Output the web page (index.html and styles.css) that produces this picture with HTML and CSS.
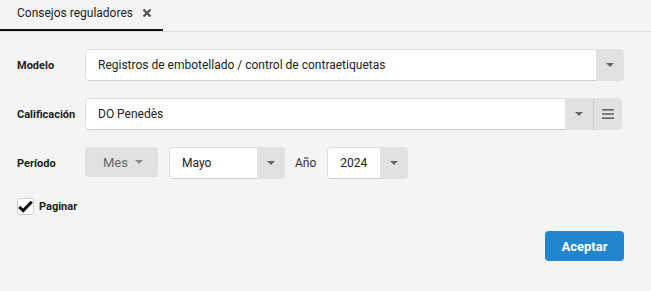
FILE: index.html
```html
<!DOCTYPE html>
<html>
<head>
<meta charset="utf-8">
<link rel="stylesheet" href="styles.css">
</head>
<body>
<div class="tabbar">
  <div class="tab">Consejos reguladores <svg class="close" width="10" height="10" viewBox="0 0 10 10"><path d="M1.5 1.5 L8.5 8.5 M8.5 1.5 L1.5 8.5" stroke="#555" stroke-width="2.4" stroke-linecap="butt"/></svg></div>
</div>
<div class="form">
  <div class="row">
    <label class="lbl">Modelo</label>
    <div class="group">
      <div class="input grow">Registros de embotellado / control de contraetiquetas</div>
      <div class="btn drop"><span class="caret"></span></div>
    </div>
  </div>
  <div class="row row-cal">
    <label class="lbl">Calificación</label>
    <div class="group">
      <div class="input grow">DO Penedès</div>
      <div class="btn drop mid"><span class="caret"></span></div>
      <div class="btn drop menu">
        <svg width="12" height="10" viewBox="0 0 12 10"><rect x="0" y="0" width="12" height="1.6" fill="#666"/><rect x="0" y="4.2" width="12" height="1.6" fill="#666"/><rect x="0" y="8.4" width="12" height="1.6" fill="#666"/></svg>
      </div>
    </div>
  </div>
  <div class="row">
    <label class="lbl">Período</label>
    <div class="mes">Mes <span class="caret"></span></div>
    <div class="group small mayo">
      <div class="input">Mayo</div>
      <div class="btn drop"><span class="caret"></span></div>
    </div>
    <span class="ano">Año</span>
    <div class="group small year">
      <div class="input">2024</div>
      <div class="btn drop"><span class="caret"></span></div>
    </div>
  </div>
  <div class="check-row">
    <span class="checkbox">
      <svg width="15" height="13" viewBox="0 0 15 13"><path d="M1.2 6.8 L5.2 10.6 L13.8 1.8" fill="none" stroke="#111" stroke-width="3" stroke-linecap="butt" stroke-linejoin="miter"/></svg>
    </span>
    <span class="check-lbl">Paginar</span>
  </div>
  <div class="actions">
    <button class="primary">Aceptar</button>
  </div>
</div>
</body>
</html>
```
FILE: styles.css
```css
html, body {
  margin: 0;
  padding: 0;
  background: #f4f4f4;
  font-family: Roboto, "Liberation Sans", sans-serif;
  color: #222;
}
.tabbar {
  height: 31px;
  border-bottom: 1px solid #dcdcdc;
  display: flex;
}
.tab {
  box-sizing: border-box;
  width: 163px;
  height: 31px;
  padding: 6px 0 0 17px;
  font-size: 12px;
  color: #1b1b1b;
  border-bottom: 2px solid #111;
  line-height: 15px;
}
.close {
  margin-left: 6px;
  vertical-align: -1px;
}
.form {
  padding: 17px 27px 0 17px;
}
.row {
  display: flex;
  align-items: center;
  height: 32px;
  margin-bottom: 17px;
}
.row-cal .group {
  margin-right: 2px;
}
.lbl {
  width: 68px;
  flex: none;
  font-size: 11px;
  font-weight: bold;
  color: #222;
}
.group {
  flex: 1;
  display: flex;
  height: 32px;
  border-radius: 4px;
  overflow: hidden;
}
.group.small {
  flex: none;
}
.input {
  box-sizing: border-box;
  height: 32px;
  background: #fff;
  border: 1px solid #dedede;
  border-bottom-color: #cfcfcf;
  border-right: none;
  border-radius: 4px 0 0 4px;
  padding-left: 12px;
  font-size: 12px;
  line-height: 30px;
  color: #222;
}
.grow {
  flex: 1;
}
.btn {
  width: 28px;
  flex: none;
  background: #e0e1e2;
  display: flex;
  align-items: center;
  justify-content: center;
}
.btn.mid {
  border-right: 1px solid #cfd0d1;
}
.caret {
  display: inline-block;
  width: 0;
  height: 0;
  border-left: 4px solid transparent;
  border-right: 4px solid transparent;
  border-top: 4px solid #666;
}
.mes {
  box-sizing: border-box;
  width: 73px;
  height: 30px;
  margin-top: -2px;
  flex: none;
  background: #e0e1e2;
  border-radius: 4px;
  color: #666;
  font-size: 13px;
  display: flex;
  align-items: center;
  padding-left: 18px;
  gap: 7px;
}
.mes .caret {
  border-top-color: #888;
}
.mayo {
  margin-left: 11px;
}
.mayo .input {
  width: 88px;
}
.ano {
  margin: 0 11px 0 10px;
  font-size: 12px;
  color: #333;
}
.year .input {
  width: 53px;
}
.check-row {
  display: flex;
  align-items: center;
  height: 20px;
  margin-top: 0;
}
.checkbox {
  box-sizing: border-box;
  width: 17px;
  height: 17px;
  background: #fff;
  border: 1px solid #cfcfcf;
  border-radius: 3px;
  display: flex;
  align-items: center;
  justify-content: center;
}
.check-lbl {
  margin-left: 5px;
  font-size: 11px;
  font-weight: bold;
  color: #222;
}
.actions {
  display: flex;
  justify-content: flex-end;
  margin-top: 15px;
}
.primary {
  width: 79px;
  height: 30px;
  border: none;
  border-radius: 4px;
  background: #2185d0;
  color: #fff;
  font-family: Roboto, "Liberation Sans", sans-serif;
  font-weight: bold;
  font-size: 13px;
  padding: 0;
}
```
